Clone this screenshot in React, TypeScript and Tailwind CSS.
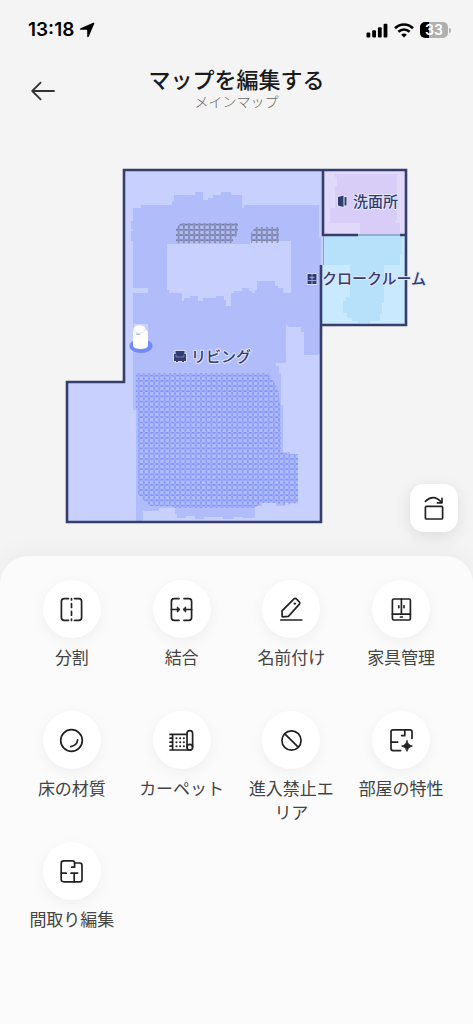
import type { ReactNode } from "react"

interface Tool {
  label: string
  icon: ReactNode
}

const strokeProps = {
  fill: "none",
  stroke: "currentColor",
  strokeWidth: 1.7,
  strokeLinecap: "round" as const,
  strokeLinejoin: "round" as const,
}

const tools: Tool[] = [
  {
    label: "分割",
    icon: (
      <g {...strokeProps}>
        <path d="M11.5 3.6H7.2Q4.4 3.6 4.4 6.4V22.6Q4.4 25.4 7.2 25.4H11.5M17.5 3.6H21.8Q24.6 3.6 24.6 6.4V22.6Q24.6 25.4 21.8 25.4H17.5" />
        <path d="M14.5 3.6V5M14.5 8.6V12.4M14.5 16.4V20.2M14.5 24V25.4" />
      </g>
    ),
  },
  {
    label: "結合",
    icon: (
      <g {...strokeProps}>
        <path d="M12 3.6H7.2Q4.4 3.6 4.4 6.4V22.6Q4.4 25.4 7.2 25.4H12M17 3.6H21.8Q24.6 3.6 24.6 6.4V22.6Q24.6 25.4 21.8 25.4H17" />
        <path d="M4.4 14.5H11M24.6 14.5H18" />
        <path d="M10.6 12.2L13 14.5L10.6 16.8ZM18.4 12.2L16 14.5L18.4 16.8Z" fill="currentColor" strokeWidth={1} />
      </g>
    ),
  },
  {
    label: "名前付け",
    icon: (
      <g {...strokeProps}>
        <path d="M17 3.8Q18.2 2.8 19.3 3.8L22.4 7Q23.3 8 22.4 9.1L11.4 21.4L5.2 21.8L5 15.8Z" />
        <circle cx="17.8" cy="8.6" r="1.2" fill="currentColor" stroke="none" />
        <path d="M3.8 25H24.8" />
      </g>
    ),
  },
  {
    label: "家具管理",
    icon: (
      <g {...strokeProps}>
        <rect x="5.4" y="4" width="18" height="21" rx="1.4" />
        <path d="M5.4 19.2H23.4M14.4 4V19.2M13.4 22H15.4" />
        <path d="M11.8 10.8V12.6M17 10.8V12.6" />
      </g>
    ),
  },
  {
    label: "床の材質",
    icon: (
      <g {...strokeProps}>
        <circle cx="14.5" cy="14.5" r="10.8" />
        <path d="M20.6 13.8Q20.2 19.4 13.8 20.6" />
      </g>
    ),
  },
  {
    label: "カーペット",
    icon: (
      <g {...strokeProps} strokeWidth={1.7}>
        <path d="M3 8.4H20M3 24H23.4M5.6 8.4V24" />
        <path d="M3 12.2H5M3 16.2H5M3 20.2H5" />
        <path d="M20 21V7.4Q20 4.6 22.8 4.6Q25.6 4.6 25.6 7.4V21" />
        <circle cx="22.8" cy="21.2" r="2.8" />
        <path d="M9.4 12.2H18M9.4 16.2H18M9.4 20.2H18" strokeWidth={2} strokeDasharray="0.1 3.6" />
      </g>
    ),
  },
  {
    label: "進入禁止エリア",
    icon: (
      <g {...strokeProps}>
        <circle cx="14.5" cy="14.5" r="9.6" />
        <path d="M7.8 7.8L21.2 21.2" />
      </g>
    ),
  },
  {
    label: "部屋の特性",
    icon: (
      <g {...strokeProps}>
        <path d="M13.6 24.6H6Q4 24.6 4 22.6V5.8Q4 3.8 6 3.8H23Q25 3.8 25 5.8V12.4" />
        <path d="M4 16.2H10.6M17.8 3.8V9.6H14.6" />
        <path
          d="M20 14.6Q20.8 19.2 25.4 20Q20.8 20.8 20 25.4Q19.2 20.8 14.6 20Q19.2 19.2 20 14.6Z"
          fill="currentColor"
          strokeWidth={0.8}
        />
      </g>
    ),
  },
  {
    label: "間取り編集",
    icon: (
      <g {...strokeProps}>
        <path d="M4.2 6.4Q4.2 3.8 6.8 3.8H15.4Q17.6 3.8 17.6 6H22.6Q25 6 25 8.4V22.4Q25 24.8 22.6 24.8H6.8Q4.2 24.8 4.2 22.4Z" />
        <path d="M17.6 6V10.2H14.8M4.2 16.2H9.2M14 16.2H20.6M17.2 16.2V24.8" />
      </g>
    ),
  },
]

function StatusBar() {
  return (
    <div className="flex h-15 items-center justify-between pl-7 pr-[22px] text-black">
      <div className="flex items-center gap-[5px]">
        <span className="text-[19px] font-semibold">13:18</span>
        <svg className="size-4" viewBox="0 0 16 16" fill="currentColor" aria-hidden="true">
          <path d="M14.2 0.8Q15.7 0.3 15.2 1.8L9.8 14.4Q8.8 16 8.2 14.4V8.6Q8.2 7.8 7.4 7.8H1.6Q0 7.2 1.6 6.2Z" />
        </svg>
      </div>
      <div className="flex items-center gap-[6px]">
        <svg className="h-[15px] w-[22px]" viewBox="0 0 22 15" fill="currentColor" aria-hidden="true">
          <rect x="0.5" y="9.6" width="3.8" height="4.9" rx="1" />
          <rect x="6.2" y="7.2" width="3.8" height="7.3" rx="1" />
          <rect x="11.9" y="4.2" width="3.8" height="10.3" rx="1" />
          <rect x="17.6" y="0.8" width="3.8" height="13.7" rx="1" />
        </svg>
        <svg className="h-[15px] w-5" viewBox="0 0 20 15" fill="none" stroke="currentColor" strokeWidth="2.6" aria-hidden="true">
          <path d="M1 5.2Q5 1.5 10 1.5Q15 1.5 19 5.2" />
          <path d="M4.4 8.8Q7 6.5 10 6.5Q13 6.5 15.6 8.8" />
          <path d="M10 14.6L7.2 11.7Q10 9.5 12.8 11.7Z" fill="currentColor" stroke="none" />
        </svg>
        <div className="flex items-center gap-px">
          <div className="flex h-4 w-7 items-center justify-center rounded-[5px] bg-linear-to-r from-black from-33% to-[#b0b0b0] to-33% text-sm font-semibold text-white">
            33
          </div>
          <span className="h-[5px] w-[2px] rounded-r-full bg-[#b0b0b0]" />
        </div>
      </div>
    </div>
  )
}

function FloorMap() {
  return (
    <svg className="block w-full" viewBox="0 120 473 436" role="img" aria-label="メインマップ">
      <defs>
        <pattern id="carpet" x="136" y="373" width="5.2" height="5.2" patternUnits="userSpaceOnUse">
          <path d="M0 2.6H1.5M3.7 2.6H5.2M2.6 0V1.5M2.6 3.7V5.2" stroke="#7184fa" strokeWidth="1.1" />
          <path d="M1.5 1.5L3.7 3.7M3.7 1.5L1.5 3.7" stroke="#98a6f8" strokeWidth="0.5" />
        </pattern>
        <pattern id="rug" x="176" y="222" width="5.2" height="5.2" patternUnits="userSpaceOnUse">
          <path d="M0 2.6H1.5M3.7 2.6H5.2M2.6 0V1.5M2.6 3.7V5.2" stroke="#62667c" strokeWidth="1.1" />
          <path d="M1.5 1.5L3.7 3.7M3.7 1.5L1.5 3.7" stroke="#767b99" strokeWidth="0.6" />
        </pattern>
      </defs>

      {/* living room */}
      <path d="M124 170H323V265H321V522H67V382H124Z" fill="#c8d1fe" />
      <path
        d="M133 208H141V205H172V201H174V195H195V192H203V200H208V198H213V195H221V192H231V195H242V208H244V205H319V237H321V353L318 355H304V332H301V327H289L286 324V363H276V366H279V373H281V405H283V452H290V454H298V503H285V506H276V503H262V506H255V518H243V517H234V519H223V517H204V519H195V516H186V518H177V514H175V508H159V511H143V521H136V410H133V293H148V288H133V241H131V231H133V229H131V221H133Z"
        fill="#b1bdfa"
      />
      <path
        d="M167 244H250V241H291V293H283V288H278V286H275V281H257V290H255V293H252V291H249V288H242V291H234V293H231V306H226V300H224V296H216V298H203V301H198V296H190V298H184V301H182V293H169V290H167Z"
        fill="#c8d1fe"
      />
      <path d="M181 223H238V231L236 237H233V243H176V228Z" fill="url(#rug)" />
      <path d="M256 227H279V243H251V233Z" fill="url(#rug)" />
      <path
        d="M136 373H268L273 380L278 390L280 405L281 452L288 454H298V503L284 505L276 503H262L254 508H175L172 506H151L143 500L138 494V410H136Z"
        fill="url(#carpet)"
      />

      {/* washroom */}
      <path d="M323 170H406V235H323Z" fill="#e1d9fa" />
      <path d="M335 174H397V220H395V223H400V235H360V223H330V208H335V186H337V177H335Z" fill="#d8cdf6" />

      {/* cloakroom */}
      <path d="M323 235H406V325H321V265H323Z" fill="#c8e9fe" />
      <path
        d="M323 236H402V254H400V265H384V303H382V313H380V321H370V323H358V321H352V318H347V313H343V301H346V297H350V265H323Z"
        fill="#b7e0fb"
      />

      <g fill="none" stroke="#363e6d" strokeWidth="2.6">
        <path d="M124 170H406V325H321M124 168.7V382H67V522H321V265" />
        <path d="M323 170V235H358M400 235H406" />
      </g>
      <path d="M358 235H400" stroke="#93acd2" strokeWidth="2" />
      <path d="M323.5 236V265" stroke="#84a3c8" />

      {/* dock */}
      <ellipse cx="141" cy="346" rx="11.5" ry="7" fill="#7388fa" />
      <rect x="134" y="324" width="14" height="12" fill="#c8d1fe" />
      <path d="M133 332Q133 329 136 330H145Q148 330 148 333V346Q147 349 140.5 349Q134 349 133 346Z" fill="#fff" />
      <ellipse cx="139.5" cy="329" rx="6" ry="4" fill="#fff" stroke="#dce1fa" strokeWidth="0.8" />
      <path d="M136 333.8Q138 334.8 140 334.2" fill="none" stroke="#98a5dc" strokeWidth="1" />

      {/* room markers */}
      <g fill="#333c70" stroke="#e3e7ff" strokeWidth="1.5" paintOrder="stroke">
        <path d="M338 197L343.5 195.5V207L338 205.5ZM344.5 197H346.5V205.5H344.5Z" />
        <path d="M307.5 274H316.5V284H307.5Z" />
        <path d="M175.5 351H184.5V354H186V361H184V362H182V361H178V362H176V361H174V354H175.5Z" />
      </g>
      <path d="M312 274V284M307.5 280.5H316.5M309.5 277.5H314.5" stroke="#b1bdfa" strokeWidth="0.8" />
      <path d="M176 354.500V357H184V354.500" fill="none" stroke="#8791c4" strokeWidth="0.8" />
      <g
        className="text-[15px] font-medium"
        fill="#333c70"
        stroke="#e3e8ff"
        strokeWidth="2"
        strokeLinejoin="round"
        paintOrder="stroke"
      >
        <text x="353" y="207">洗面所</text>
        <text x="322" y="284">クロークルーム</text>
        <text x="191" y="362">リビング</text>
      </g>
    </svg>
  )
}

export default function App() {
  return (
    <div className="flex min-h-screen flex-col bg-[#f4f4f4] font-['Inter','Noto_Sans_CJK_JP',sans-serif]">
      <StatusBar />

      <header className="grid h-15 grid-cols-[1fr_auto_1fr] items-center px-[30px]">
        <button type="button" aria-label="戻る" className="w-7 text-[#333]">
          <svg className="size-7" viewBox="0 0 28 28" fill="none" stroke="currentColor" strokeWidth="1.8" strokeLinecap="round" strokeLinejoin="round">
            <path d="M24 15H2.4M10.6 6.6L2.2 15L10.6 23.4" />
          </svg>
        </button>
        <div className="text-center">
          <h1 className="text-[22px] leading-6 font-medium text-[#1a1a1a]">マップを編集する</h1>
          <p className="text-sm font-light text-[#666]">メインマップ</p>
        </div>
      </header>

      <main className="relative">
        <FloorMap />
        <button
          type="button"
          aria-label="マップを回転"
          className="absolute right-[15px] bottom-6 flex size-12 items-center justify-center rounded-[14px] bg-white text-[#222] shadow-[0_4px_16px_rgba(0,0,0,0.1)]"
        >
          <svg className="size-6" viewBox="0 0 24 24" fill="none" stroke="currentColor" strokeWidth="1.7" strokeLinecap="round" strokeLinejoin="round">
            <rect x="3.4" y="10.4" width="17.2" height="12.6" rx="1" />
            <path d="M3.4 5.4Q11 -2.6 19.4 6" />
            <path d="M20 2.4V6.8H15.4" />
          </svg>
        </button>
      </main>

      <section className="relative grow rounded-t-[28px] bg-[#fbfbfb] px-[17px] pt-6 pb-8 shadow-[0_-4px_24px_rgba(0,0,0,0.04)]">
        <div className="grid auto-rows-fr grid-cols-4 gap-y-[17px]">
          {tools.map(tool => (
            <button key={tool.label} type="button" className="flex flex-col items-center gap-2 px-3 text-[#444]">
              <span className="flex size-[58px] items-center justify-center rounded-full bg-white text-[#222] shadow-[0_4px_14px_rgba(0,0,0,0.05)]">
                <svg className="size-[29px]" viewBox="0 0 29 29" aria-hidden="true">
                  {tool.icon}
                </svg>
              </span>
              <span className="text-[17px] leading-6 font-normal">{tool.label}</span>
            </button>
          ))}
        </div>
      </section>
    </div>
  )
}
